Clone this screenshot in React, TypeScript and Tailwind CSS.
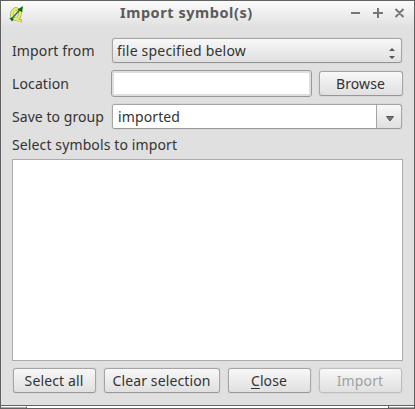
import type { ReactNode } from "react";

const raised =
  "h-[25px] shrink-0 rounded-[3px] border border-[#a5a5a5] border-b-[#969696] bg-linear-to-b from-[#f8f8f8] to-[#e0e0e0] shadow-[0_0_0_1px_#d9d9d9]";

function Label({ children, className = "" }: { children: ReactNode; className?: string }) {
  return <span className={`block whitespace-nowrap ${className}`}>{children}</span>;
}

function Button({ children, className = "" }: { children: ReactNode; className?: string }) {
  return (
    <button className={`${raised} flex items-center justify-center whitespace-nowrap pr-px ${className}`}>
      {children}
    </button>
  );
}

function Logo() {
  return (
    <svg width="16" height="19" viewBox="0 0 16 19" className="shrink-0">
      <g fill="none" stroke="#8f9650">
        <ellipse cx="6.8" cy="9" rx="4" ry="5" transform="rotate(12 6.8 9)" strokeWidth="3.4" />
        <path d="M6 13.5c2-.5 3 3 7 2.2" strokeWidth="3" />
      </g>
      <g fill="none" stroke="#eaf05f">
        <ellipse cx="6.8" cy="9" rx="4" ry="5" transform="rotate(12 6.8 9)" strokeWidth="2.4" />
        <path d="M6 13.5c2-.5 3 3 6.6 2.2" strokeWidth="2" />
      </g>
      <path d="M2.5 14 11.5 4" stroke="#2c7a35" strokeWidth="1.5" />
      <path d="M8.5 4.5 14 1 13.2 7.2ZM.5 13.3l2.5-.8 1.8 1.8L3 16.5Z" fill="#176722" />
    </svg>
  );
}

export default function App() {
  return (
    <div className="flex h-[409px] w-[415px] flex-col overflow-hidden border border-[#616161] bg-[#e0e0e0] font-['Noto_Sans','Open_Sans',sans-serif] text-[14px] leading-[20px] tracking-[0.12px] text-[#333]">
      <header className="flex h-[27px] shrink-0 items-center bg-linear-to-b from-[#fbfbfb] to-[#e0e0e0] pl-[8px]">
        <div className="w-[111px] pb-[1px]"><Logo /></div>
        <h1 className="w-[230px] whitespace-nowrap pb-[5px] text-[14.5px] font-bold tracking-[0.55px] text-[#5b5b5b]">Import symbol(s)</h1>
        <svg width="56" height="12" viewBox="0 0 56 12" fill="none" stroke="#777" strokeWidth="2" className="mb-[4px]">
          <path d="M1 6h9M23 6h10M28 1v10M45.5 2l8 8M53.5 2l-8 8" />
        </svg>
      </header>

      <main className="flex h-[377px] shrink-0 flex-col pl-[11px] pt-[10px]">
        <div className="flex h-[25px] items-center">
          <Label className="w-[100px]">Import from</Label>
          <div className={`${raised} flex w-[290px] items-center justify-between pl-[4px] pr-[6px]`}>
            <Label className="tracking-[0.2px]">file specified below</Label>
            <svg width="6" height="13" viewBox="0 0 6 13" fill="#555" className="mt-[5px]">
              <path d="M0 4 3 1l3 3ZM0 9h6l-3 3Z" />
            </svg>
          </div>
        </div>

        <div className="mt-[7px] flex h-[27px] items-center">
          <Label className="w-[99px]">Location</Label>
          <div className="h-[27px] w-[201px] rounded-[3px] border border-[#999] bg-white shadow-[inset_0_0_0_2px_#dedede]" />
          <Button className="ml-[7px] w-[84px]">Browse</Button>
        </div>

        <div className="mt-[7px] flex h-[25px] items-center">
          <Label className="w-[100px] tracking-[0.05px]">Save to group</Label>
          <div className={`${raised} flex w-[290px] overflow-hidden`}>
            <div className="flex w-[264px] items-center border-r border-[#a5a5a5] bg-white pl-[5px]">
              <Label>imported</Label>
            </div>
            <div className="flex flex-1 items-center justify-center pl-[2px] pt-[5px]">
              <svg width="8" height="6" viewBox="0 0 8 6"><path d="M.5.5h7L4 5Z" fill="#777" stroke="#555" /></svg>
            </div>
          </div>
        </div>

        <Label className="mt-[6px]">Select symbols to import</Label>
        <div className="mt-[4px] h-[202px] w-[391px] shrink-0 border border-[#ababab] bg-white" />

        <div className="mt-[7px] flex pl-[1px]">
          <Button className="w-[83px]">Select all</Button>
          <Button className="ml-[8px] w-[116px]">Clear selection</Button>
          <Button className="ml-[8px] w-[83px]"><span><span className="underline underline-offset-2">C</span>lose</span></Button>
          <Button className="ml-[8px] w-[83px] border-[#bebebe] border-b-[#bebebe] from-[#e3e3e3] to-[#dcdcdc] text-[#a0a0a0]">Import</Button>
        </div>
      </main>

      <footer className="flex h-[3px] shrink-0 border-t border-[#616161]">
        <div className="w-[26px] border-r border-t border-[#616161] border-t-white bg-[#aaa]" />
        <div className="w-[362px] border-r border-[#616161] bg-white" />
        <div className="flex-1 border-t border-white bg-[#aaa]" />
      </footer>
    </div>
  );
}
